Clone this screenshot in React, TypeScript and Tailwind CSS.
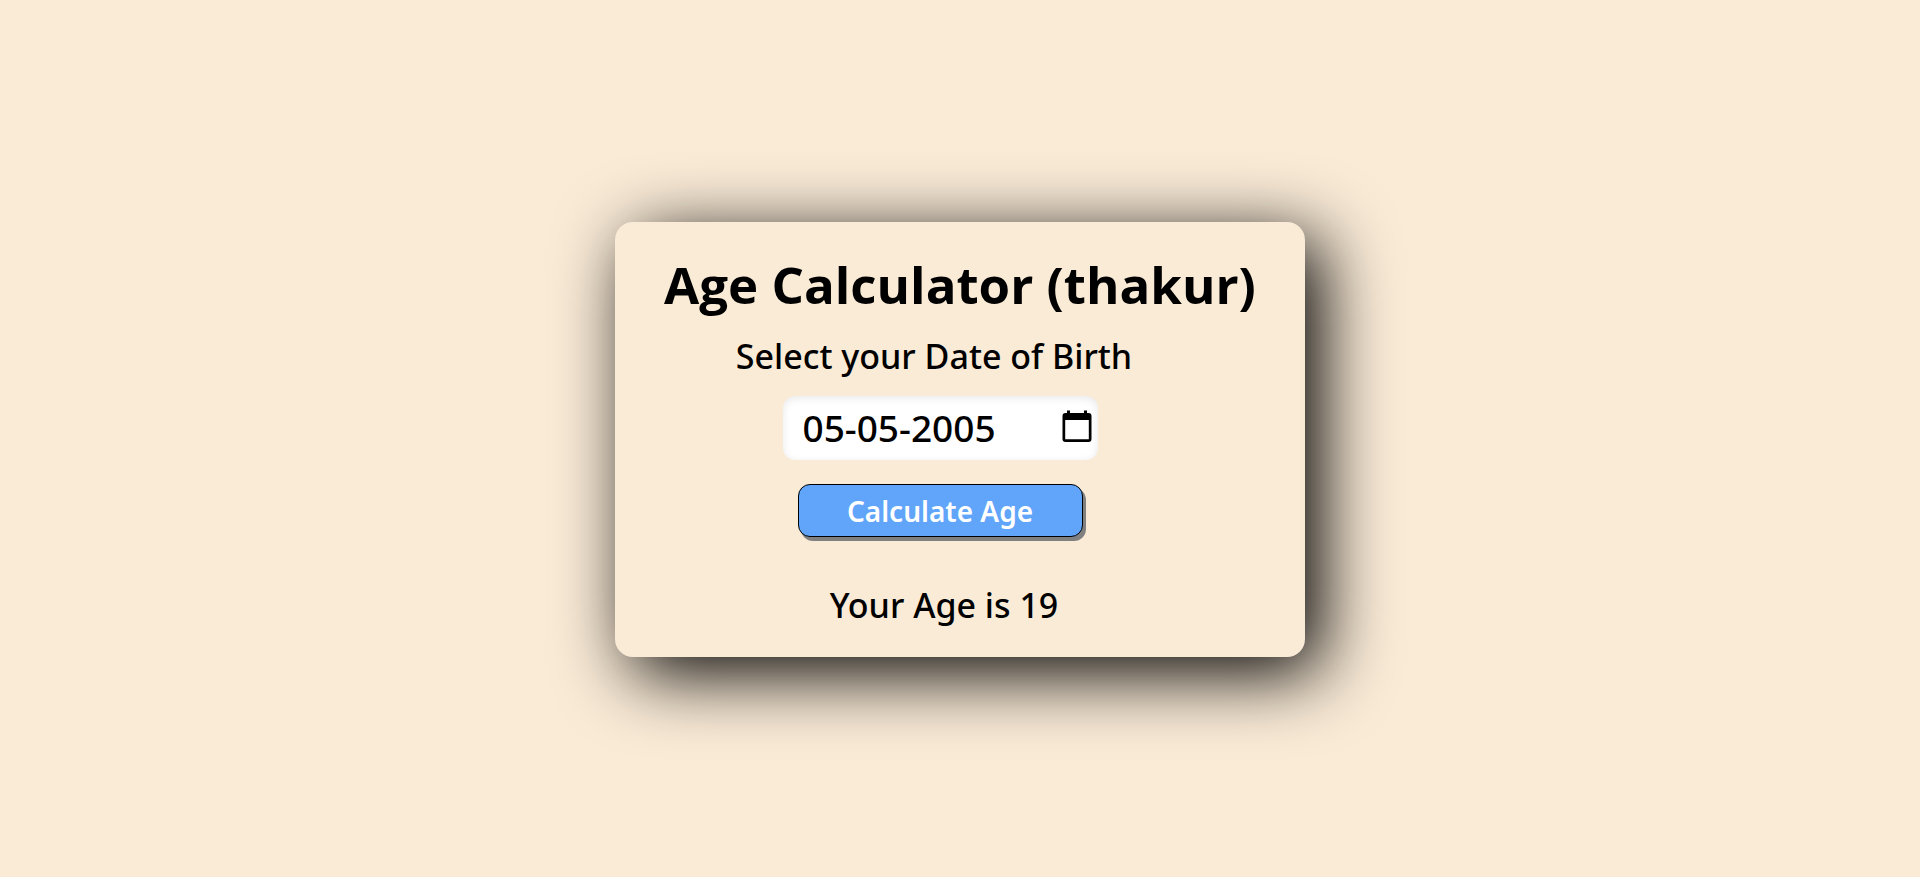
import { useState } from "react";

function ageFrom(value: string): number | null {
  const match = value.match(/^(\d{2})-(\d{2})-(\d{4})$/);
  if (!match) return null;
  const [day, month, year] = match.slice(1).map(Number);
  const now = new Date();
  const beforeBirthday =
    now.getMonth() + 1 < month || (now.getMonth() + 1 === month && now.getDate() < day);
  return now.getFullYear() - year - (beforeBirthday ? 1 : 0);
}

function CalendarIcon() {
  return (
    <svg viewBox="0 0 30 32" className="h-8 w-[30px]" aria-hidden="true">
      <path
        fill="black"
        fillRule="evenodd"
        d="M5 0.500h3v2.500h14v-2.500h3v2.500h1.500a3 3 0 0 1 3 3v23a3 3 0 0 1-3 3h-23a3 3 0 0 1-3-3v-23a3 3 0 0 1 3-3h1.500zM3.200 10v19.200h23.600v-19.200z"
      />
    </svg>
  );
}

export default function App() {
  const [birthDate, setBirthDate] = useState("05-05-2005");
  const [age, setAge] = useState<number | null>(19);

  return (
    <main className="flex min-h-screen items-center justify-center bg-[#faebd7] pt-0.5 font-['Noto_Sans',sans-serif] text-black">
      <section className="flex w-full max-w-[690px] flex-col items-center rounded-[18px] bg-[#faebd7] px-10 pt-[26px] pb-7 shadow-[16px_16px_72px_black]">
        <h1 className="text-center font-['Open_Sans',sans-serif] text-[51px] leading-[72px] font-bold">
          Age Calculator (thakur)
        </h1>
        <form
          className="flex flex-col items-center pr-10"
          onSubmit={(event) => {
            event.preventDefault();
            setAge(ageFrom(birthDate));
          }}
        >
          <label htmlFor="dob" className="mt-3 mr-3 text-[34px] leading-[48px] font-medium">
            Select your Date of Birth
          </label>
          <div className="mt-4 flex h-16 w-[315px] items-center rounded-xl bg-white pr-1.5 pl-5 shadow-[inset_0_2px_8px_#00000018]">
            <input
              id="dob"
              type="text"
              value={birthDate}
              onChange={(event) => setBirthDate(event.target.value)}
              className="min-w-0 flex-1 bg-transparent text-[37px] leading-[48px] font-medium outline-none"
            />
            <button type="button" aria-label="Open calendar" className="mb-1">
              <CalendarIcon />
            </button>
          </div>
          <button
            type="submit"
            className="mt-6 h-[53px] w-[285px] rounded-xl border border-black bg-[#60a5fa] text-[28px] leading-none font-semibold text-white shadow-[3px_4px_0_gray]"
          >
            Calculate Age
          </button>
        </form>
        <p className="mt-11 pr-8 text-[34px] leading-[48px] font-medium">Your Age is {age}</p>
      </section>
    </main>
  );
}
